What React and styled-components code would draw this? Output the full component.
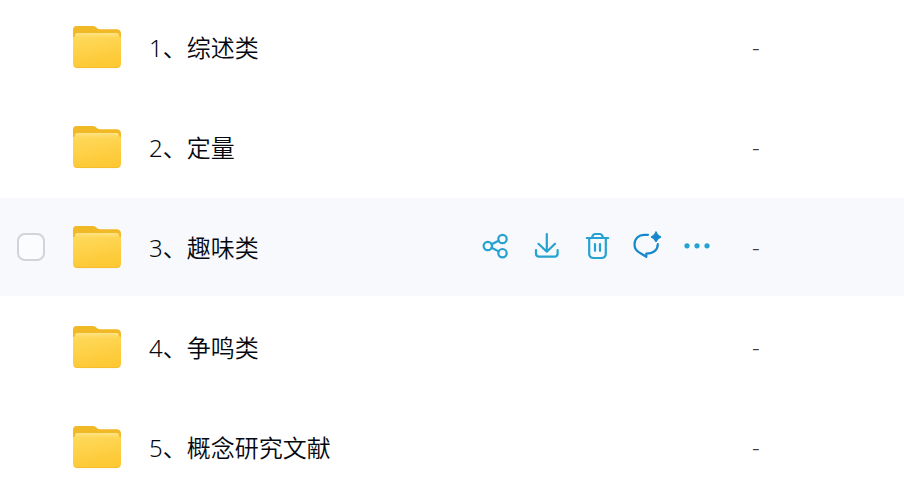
import React, { useState } from 'react';
import styled, { createGlobalStyle } from 'styled-components';

const GlobalStyle = createGlobalStyle`
    * {
        box-sizing: border-box;
    }
    body {
        margin: 0;
        background-color: #ffffff;
        color: #05080f;
        font-family: "Noto Sans", "Noto Sans CJK SC", sans-serif;
        font-weight: 350;
    }
`;

const List = styled.ul`
    list-style: none;
    margin: -2px 0 0;
    padding: 0;
    overflow: hidden;
`;

const Row = styled.li`
    display: flex;
    align-items: center;
    height: 98px;
    margin-bottom: 2px;
    padding-left: 17px;
    background-color: ${props => props.$active ? '#f7f9fd' : 'transparent'};

    &:last-child {
        margin-bottom: 0;
    }
`;

const Checkbox = styled.input`
    appearance: none;
    flex-shrink: 0;
    width: 28px;
    height: 28px;
    margin: 0 27px 0 0;
    border: 2px solid #d2d4da;
    border-radius: 8px;
    background-color: #fbfcfe;
    opacity: ${props => props.$visible ? 1 : 0};

    &:checked {
        background-color: #1b9ed0;
        border-color: #1b9ed0;
    }
`;

const Name = styled.label`
    display: flex;
    align-items: center;
    flex: 1;
    gap: 27px;
    min-width: 0;
    font-size: 24px;
    line-height: 36px;
    white-space: nowrap;
`;

const Title = styled.span`
    padding-top: 2px;
`;

const FolderSvg = styled.svg`
    flex-shrink: 0;
    width: 50px;
    height: 44px;
`;

const Actions = styled.div`
    display: flex;
    gap: 22px;
    margin-right: 41px;
    padding-bottom: 2px;
`;

const ActionButton = styled.button`
    width: 28px;
    height: 28px;
    padding: 0;
    border: none;
    background: none;
    color: #25a2cf;
    cursor: pointer;

    svg {
        display: block;
        width: 28px;
        height: 28px;
        overflow: visible;
    }
`;

const Size = styled.span`
    flex-shrink: 0;
    width: 152px;
    color: #3c3f45;
    font-size: 24px;
    line-height: 36px;
`;

const FolderIcon = () => (
    <FolderSvg viewBox="0 0 50 44" aria-hidden="true">
        <defs>
            <linearGradient id="folderFront" x1="0" y1="0" x2="0.3" y2="1">
                <stop offset="0" stopColor="#ffdb60" />
                <stop offset="1" stopColor="#fdc935" />
            </linearGradient>
            <linearGradient id="folderShine" x1="0" y1="0" x2="0" y2="1">
                <stop offset="0" stopColor="#ffe48c" />
                <stop offset="1" stopColor="#ffdb60" stopOpacity="0" />
            </linearGradient>
        </defs>
        <path d="M1 4.5Q1 1 4.500 1H20.500Q22.500 1 24 2.300L25.500 3.500Q26.500 4.300 28.500 4.300H44.500Q49 4.300 49 8.800V20H1Z" fill="#f2b926" />
        <path d="M1 12Q3 12 3 10.500Q3 8 6 8H44Q47 8 47 10.500Q47 12 49 12V38.500Q49 43 44.500 43H5.500Q1 43 1 38.500Z" fill="url(#folderFront)" />
        <path d="M3 14V10.500Q3 8 6 8H44Q47 8 47 10.500V14Z" fill="url(#folderShine)" />
        <path d="M2 41Q3.500 42.600 6 42.600H44Q46.500 42.600 48 41" fill="none" stroke="#f1b92d" strokeWidth="0.800" />
    </FolderSvg>
);

const Icon = ({ children }) => (
    <svg viewBox="0 0 28 28" fill="none" stroke="currentColor" strokeWidth="2.2" strokeLinecap="round" strokeLinejoin="round" aria-hidden="true">
        {children}
    </svg>
);

const actions = [
    {
        label: '分享',
        icon: (
            <Icon>
                <circle cx="4.800" cy="14" r="4.200" />
                <circle cx="19.500" cy="7" r="4.200" />
                <circle cx="19.500" cy="21.200" r="4.200" />
                <path d="M8.600 12.300L15.600 8.700M8.600 15.700L15.600 19.400" />
            </Icon>
        ),
    },
    {
        label: '下载',
        icon: (
            <Icon>
                <path d="M13.800 2V19.500M5.500 11.800L13.800 19.700L22 11.800M3 18V21.500Q3 24.700 6.200 24.700H21.400Q24.600 24.700 24.600 21.500V18" />
            </Icon>
        ),
    },
    {
        label: '删除',
        icon: (
            <Icon>
                <path d="M3.800 6H25.200M8.800 5.800L10 3.200Q10.600 2 12 2H17Q18.400 2 19 3.200L20.200 5.800M6.200 6.500V21.500Q6.200 26 10.700 26H18.300Q22.800 26 22.800 21.500V6.500M12 12V18.800M17 12V18.800" />
            </Icon>
        ),
    },
    {
        label: '智能助手',
        color: '#1688cc',
        icon: (
            <Icon>
                <path d="M15 2.800H11.500C5.500 2.800 1.500 7 1.500 12.500C1.500 17 4 19.600 7.500 21.200L13.300 24.800V21.600C20 21.600 24.800 18 24.800 12.200" />
                <path d="M23 0Q24.500 3.500 28 5Q24.500 6.500 23 10Q21.500 6.500 18 5Q21.500 3.500 23 0Z" fill="currentColor" strokeWidth="1" />
            </Icon>
        ),
    },
    {
        label: '更多',
        icon: (
            <Icon>
                <g fill="currentColor" stroke="none">
                    <circle cx="4" cy="13.800" r="2.600" />
                    <circle cx="14" cy="13.800" r="2.600" />
                    <circle cx="24" cy="13.800" r="2.600" />
                </g>
            </Icon>
        ),
    },
];

const RowActions = () => (
    <Actions>
        {actions.map(action => (
            <ActionButton key={action.label} type="button" aria-label={action.label} style={action.color && { color: action.color }}>
                {action.icon}
            </ActionButton>
        ))}
    </Actions>
);

const folders = [
    '1、综述类',
    '2、定量',
    '3、趣味类',
    '4、争鸣类',
    '5、概念研究文献',
];

const App = () => {
    const [active, setActive] = useState(2);

    return (
        <>
            <GlobalStyle />
            <List>
                {folders.map((name, index) => (
                    <Row key={name} $active={index === active} onClick={() => setActive(index)}>
                        <Checkbox type="checkbox" id={`folder-${index}`} $visible={index === active} />
                        <Name htmlFor={`folder-${index}`}>
                            <FolderIcon />
                            <Title>{name}</Title>
                        </Name>
                        {index === active && <RowActions />}
                        <Size>-</Size>
                    </Row>
                ))}
            </List>
        </>
    );
};

export default App;
